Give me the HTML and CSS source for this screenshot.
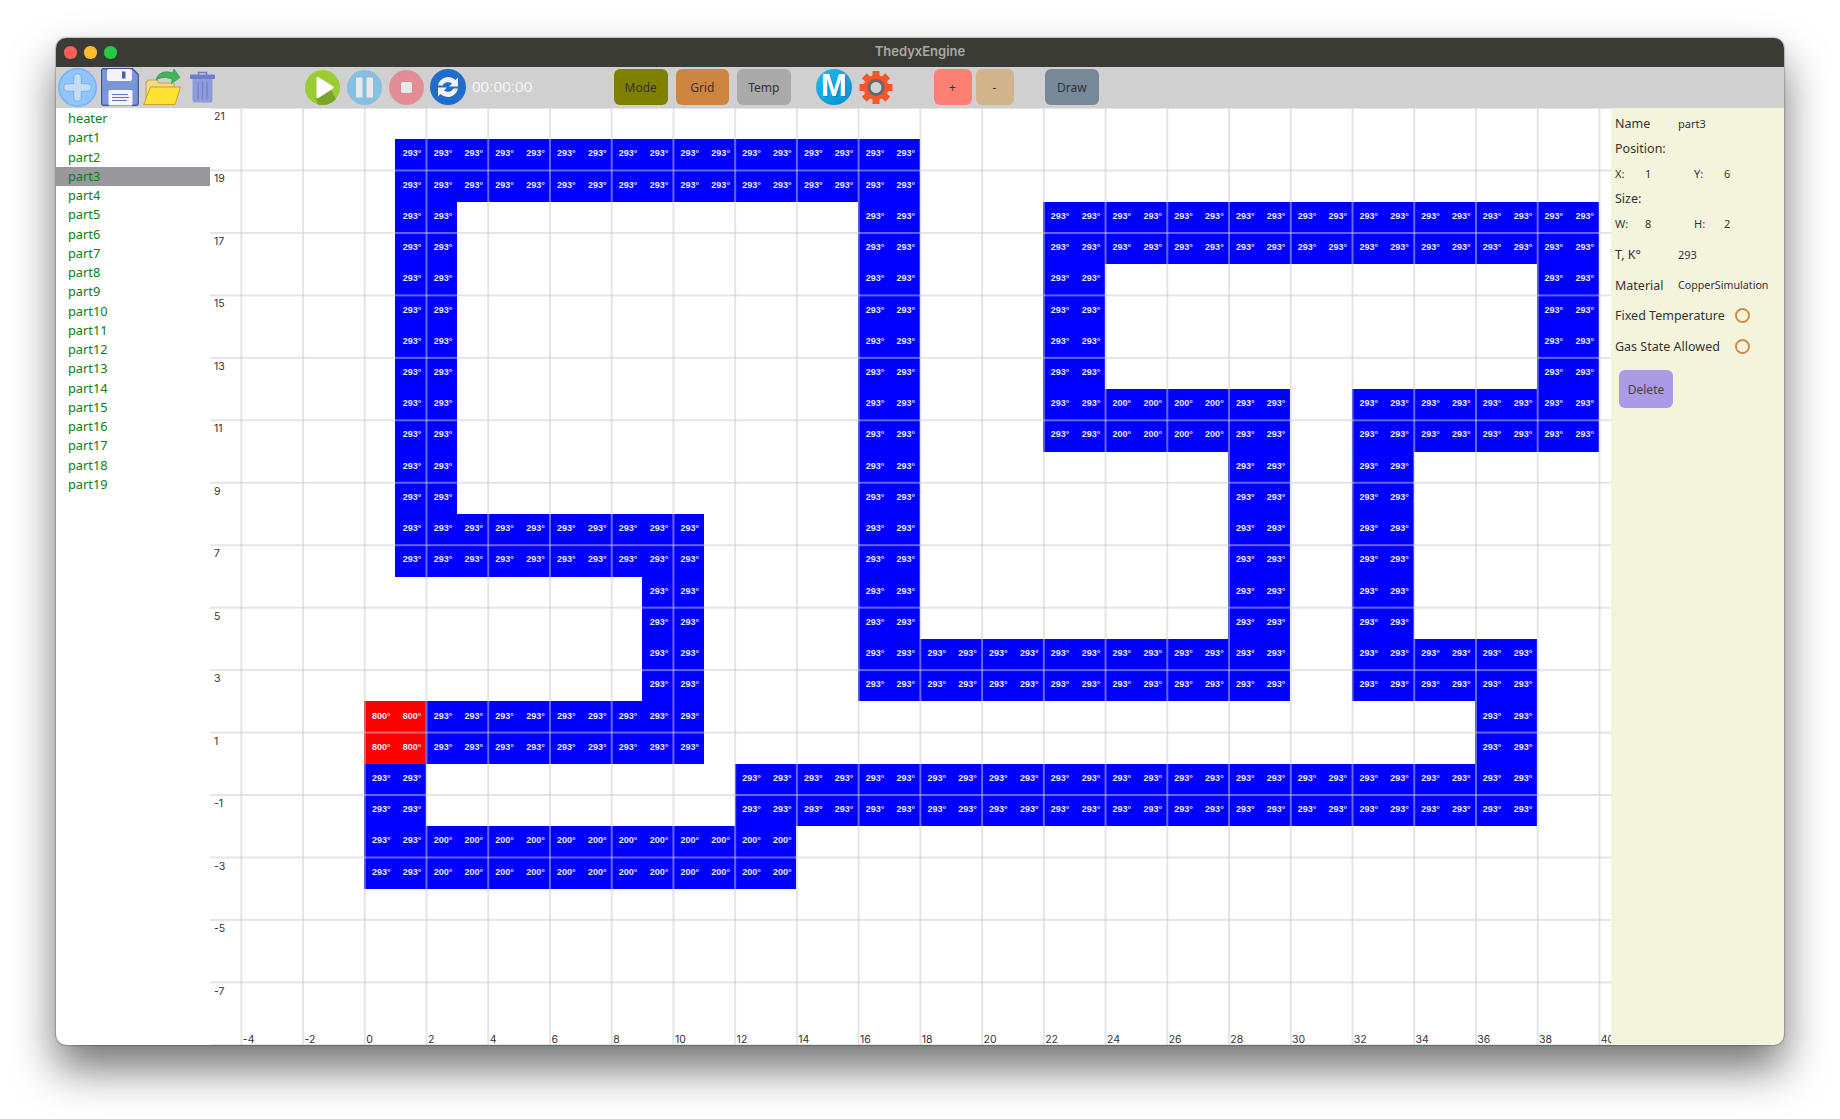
FILE: index.html
```html
<!DOCTYPE html>
<html lang="en">
<head>
    <meta charset="UTF-8">
    <title>ThedyxEngine</title>
    <link rel="stylesheet" href="styles.css">
</head>
<body>
    <div class="window">
        <div class="titlebar">
            <div class="lights">
                <span class="light light-red"></span>
                <span class="light light-yellow"></span>
                <span class="light light-green"></span>
            </div>
            <span class="title">ThedyxEngine</span>
        </div>

        <div class="toolbar">
            <svg class="icon file-group" width="39" height="39" viewBox="0 0 39 39">
                <circle cx="19.5" cy="19.5" r="18.7" fill="#93c5fb" stroke="#70b4fb" stroke-width="1.5"/>
                <path d="M19.5 9.5v20M9.5 19.5h20" stroke="#74b2f2" stroke-width="8.5" stroke-linecap="round"/>
                <path d="M19.5 9.5v20M9.5 19.5h20" stroke="#c6dcf3" stroke-width="6.5" stroke-linecap="round"/>
            </svg>
            <svg class="icon gap-4" width="38" height="38" viewBox="0 0 38 38">
                <path d="M2.5 .7h29l5.8 5.8v28.5a2.300 2.300 0 0 1-2.300 2.300h-32.500a2.300 2.300 0 0 1-2-2.300v-32.500a2 2 0 0 1 2-1.800z" fill="#7a95d8" stroke="#3d4f93" stroke-width="1.200"/>
                <rect x="6" y="1" width="25" height="12" rx="2" fill="#f4f4f8"/>
                <rect x="21" y="3.500" width="3.500" height="7" fill="#4a5da8"/>
                <rect x="7.500" y="22" width="24" height="15.500" rx="1.500" fill="#f4f4f8"/>
                <path d="M11 26.500h16M11 29.500h17M11 32.500h15" stroke="#5d72b8" stroke-width="1.100"/>
            </svg>
            <svg class="icon gap-4" width="38" height="38" viewBox="0 0 38 38">
                <path d="M3 36V14h1l1-2h9l2 3h15v21z" fill="#f3d987" stroke="#c9a24a"/>
                <path d="M7.500 19H37.500L32 36.500H.7z" fill="#ffe234" stroke="#c9a030"/>
                <path d="M13 12c1.500-7 9-10 16.500-7L31 1l6 8.500-8.500 6 .7-4.300C23 8.500 18 9 13 12z" fill="#3fb55a" stroke="#2c8f44" stroke-width=".6"/>
            </svg>
            <svg class="icon gap-9" width="25" height="32" viewBox="0 0 25 32">
                <path d="M8.500 4V1.500h8V4" fill="none" stroke="#6f7dc9" stroke-width="1.600"/>
                <rect x="0" y="3.500" width="25" height="4.500" rx="1.200" fill="#6f7dc9"/>
                <path d="M2.500 8h20v21.500a2 2 0 0 1-2 2h-16a2 2 0 0 1-2-2z" fill="#8e9bdc"/>
                <path d="M8 10.500v18M12.500 10.500v18M17 10.500v18" stroke="#7481cc" stroke-width="1.200"/>
            </svg>

            <svg class="icon sim-group" width="35" height="35" viewBox="0 0 35 35">
                <circle cx="17.500" cy="17.500" r="17.500" fill="#9acd32"/>
                <path d="M25 17.500L31 29A17.500 17.500 0 0 1 13 34.400L11 29z" fill="#7da52c"/>
                <path d="M11.500 8.500a1.500 1.500 0 0 1 2.300-1.200l14 9a1.500 1.500 0 0 1 0 2.400l-14 9a1.500 1.500 0 0 1-2.300-1.200z" fill="#fff"/>
            </svg>
            <svg class="icon gap-7" width="35" height="35" viewBox="0 0 35 35">
                <circle cx="17.500" cy="17.500" r="17.500" fill="#87bfe3"/>
                <rect x="9" y="7.500" width="6.500" height="20" fill="#e8e8e8"/>
                <rect x="19.500" y="7.500" width="6.500" height="20" fill="#e8e8e8"/>
            </svg>
            <svg class="icon gap-7" width="35" height="35" viewBox="0 0 35 35">
                <circle cx="17.500" cy="17.500" r="17.500" fill="#e38d94"/>
                <rect x="12" y="12" width="11" height="11" rx="2" fill="#e8e8e8"/>
            </svg>
            <svg class="icon gap-6" width="36" height="36" viewBox="0 0 36 36">
                <circle cx="18" cy="18" r="18" fill="#1f6ccb"/>
                <path d="M8 16.500a10.500 10.500 0 0 1 17.500-5.500l2.500-2.500v9h-9l3-3a6.500 6.500 0 0 0-9.500 2z" fill="#f2f2f2"/>
                <path d="M28 19.500a10.500 10.500 0 0 1-17.500 5.500L8 27.500v-9h9l-3 3a6.500 6.500 0 0 0 9.500-2z" fill="#f2f2f2"/>
            </svg>
            <span class="timer">00:00:00</span>

            <button class="tool-btn btn-mode">Mode</button>
            <button class="tool-btn btn-grid">Grid</button>
            <button class="tool-btn btn-temp">Temp</button>

            <svg class="icon logo-m" width="36" height="36" viewBox="0 0 36 36">
                <defs>
                    <linearGradient id="mFill" x1="0" y1="0" x2="1" y2="1">
                        <stop offset="0" stop-color="#1cc0f2"/>
                        <stop offset="1" stop-color="#0b8ccc"/>
                    </linearGradient>
                </defs>
                <circle cx="18" cy="18" r="18" fill="url(#mFill)"/>
                <text class="logo-letter logo-letter-shadow" x="19.500" y="28" text-anchor="middle">M</text>
                <text class="logo-letter" x="18" y="26.500" text-anchor="middle">M</text>
            </svg>
            <svg class="icon gap-7" width="34" height="35" viewBox="0 0 34 35">
                <g stroke="#f4572a" stroke-width="7">
                    <path d="M17 1v33M.5 17.500h33M5.300 5.800l23.400 23.400M28.700 5.800L5.300 29.200"/>
                </g>
                <circle cx="17" cy="17.500" r="12.500" fill="#f4572a"/>
                <circle cx="17" cy="17.500" r="7" fill="#d0d0d0" stroke="#66666e" stroke-width="3"/>
            </svg>

            <button class="tool-btn btn-small btn-plus">+</button>
            <button class="tool-btn btn-small btn-minus">-</button>
            <button class="tool-btn btn-draw">Draw</button>
        </div>

        <div class="main">
            <ul class="part-list">
                <li>heater</li>
                <li>part1</li>
                <li>part2</li>
                <li class="selected">part3</li>
                <li>part4</li>
                <li>part5</li>
                <li>part6</li>
                <li>part7</li>
                <li>part8</li>
                <li>part9</li>
                <li>part10</li>
                <li>part11</li>
                <li>part12</li>
                <li>part13</li>
                <li>part14</li>
                <li>part15</li>
                <li>part16</li>
                <li>part17</li>
                <li>part18</li>
                <li>part19</li>
            </ul>

            <!-- Cells and axis labels are added by script.js -->
            <div class="plot" id="plot"></div>

            <div class="props">
                <div class="prop-row">
                    <span class="prop-label">Name</span>
                    <span class="prop-value">part3</span>
                </div>
                <div class="prop-row">Position:</div>
                <div class="prop-row prop-small">
                    <span class="axis-label">X:</span><span class="axis-value">1</span>
                    <span class="axis-label">Y:</span><span class="axis-value">6</span>
                </div>
                <div class="prop-row">Size:</div>
                <div class="prop-row prop-small">
                    <span class="axis-label">W:</span><span class="axis-value">8</span>
                    <span class="axis-label">H:</span><span class="axis-value">2</span>
                </div>
                <div class="prop-row spaced temp-row">
                    <span class="prop-label">T, K°</span>
                    <span class="prop-value">293</span>
                </div>
                <div class="prop-row spaced">
                    <span class="prop-label">Material</span>
                    <span class="prop-value prop-material">CopperSimulation</span>
                </div>
                <div class="prop-row spaced">
                    <span class="check-label">Fixed Temperature</span>
                    <span class="radio"></span>
                </div>
                <div class="prop-row spaced">
                    <span class="check-label">Gas State Allowed</span>
                    <span class="radio"></span>
                </div>
                <button class="delete-btn">Delete</button>
            </div>
        </div>
    </div>

    <script src="script.js"></script>
</body>
</html>
```

FILE: styles.css
```css
body {
    margin: 0;
    height: 1119px;
    padding: 38px 56px 0;
    box-sizing: border-box;
    background-color: #fff;
    font-family: "Noto Sans", sans-serif;
    overflow: hidden;
}

.window {
    height: 1007px;
    display: flex;
    flex-direction: column;
    border-radius: 10px;
    overflow: hidden;
    background-color: #fff;
}

body::before {
    content: "";
    position: absolute;
    left: 56px;
    top: 38px;
    width: 1728px;
    height: 1007px;
    border-radius: 10px;
    box-shadow: 0 24px 44px rgba(0,0,0,0.55), 0 0 2px rgba(0,0,0,0.7);
}

.titlebar {
    position: relative;
    height: 29px;
    flex: none;
    display: flex;
    align-items: center;
    justify-content: center;
    padding-bottom: 4px;
    box-sizing: border-box;
    background-color: #3b3b35;
}

.lights {
    position: absolute;
    left: 8px;
    top: 8px;
    display: flex;
    gap: 7.5px;
}

.light {
    width: 12.5px;
    height: 12.5px;
    border-radius: 50%;
}

.light-red { background-color: #ff5f57; }
.light-yellow { background-color: #febc2e; }
.light-green { background-color: #28c840; }

.title {
    font-family: Inter, sans-serif;
    font-size: 13px;
    font-weight: 600;
    color: #a9a9a2;
}

.toolbar {
    height: 41px;
    flex: none;
    display: flex;
    align-items: center;
    padding: 0 0 1px 2px;
    box-sizing: border-box;
    background-color: #d0d0d0;
}

.icon {
    flex: none;
    display: block;
}

.gap-4 { margin-left: 4px; }
.gap-6 { margin-left: 6px; }
.gap-7 { margin-left: 7px; }
.gap-9 { margin-left: 9px; }
.sim-group { margin-left: 90px; }
.logo-m { margin-left: 25px; }

.logo-letter {
    font-family: "Liberation Sans", sans-serif;
    font-size: 31px;
    font-weight: 700;
    fill: #fff;
}

.logo-letter-shadow {
    fill: #0a78b4;
    opacity: 0.6;
}

.timer {
    width: 61px;
    margin-left: 6px;
    flex: none;
    font-family: "Liberation Sans", sans-serif;
    font-size: 15.5px;
    color: #f4f4f4;
}

.tool-btn {
    width: 53.5px;
    height: 36px;
    flex: none;
    padding: 0;
    border: none;
    border-radius: 6px;
    font-family: "Noto Sans", sans-serif;
    font-size: 12px;
    color: #333;
}

.btn-mode { margin-left: 81px; background-color: #808000; }
.btn-grid { margin-left: 8px; background-color: #cd853f; }
.btn-temp { margin-left: 8px; background-color: #a9a9a9; }
.btn-small { width: 38px; }
.btn-plus { margin-left: 41px; background-color: #fd7f73; }
.btn-minus { margin-left: 4px; background-color: #d2b48c; }
.btn-draw { width: 54.5px; margin-left: 31px; background-color: #778899; }

.main {
    flex: 1;
    min-height: 0;
    display: flex;
}

.part-list {
    width: 154px;
    flex: none;
    margin: 0;
    padding: 1px 0 0;
    list-style: none;
    font-size: 12.8px;
    color: #0c800c;
}

.part-list li {
    height: 19.26px;
    line-height: 19.26px;
    padding-left: 12px;
}

.part-list .selected {
    background-color: #98989c;
}

.plot {
    position: relative;
    flex: 1;
    min-width: 0;
    display: grid;
    grid-template-columns: repeat(45, 30.87px) 1fr;
    grid-template-rows: repeat(30, 1fr);
    overflow: hidden;
}

/* grid lines run over the cells, so they go in a layer on top */
.plot::after {
    content: "";
    position: absolute;
    inset: 0;
    pointer-events: none;
    background-image:
        linear-gradient(to right, rgba(203,203,203,0.5) 1.5px, transparent 1.5px),
        linear-gradient(to bottom, rgba(203,203,203,0.5) 1.5px, transparent 1.5px);
    background-size: 61.74px 100%, 100% 62.46px;
    background-position: 30.3px 0, 0 61.5px;
}

.cell {
    display: flex;
    align-items: center;
    justify-content: center;
    min-width: 0;
    min-height: 0;
    padding: 0 0 3px 3px;
    box-sizing: border-box;
    background-color: #0000ff;
    font-family: "Liberation Sans", sans-serif;
    font-size: 9px;
    font-weight: 700;
    color: #e8e8ff;
    white-space: nowrap;
}

.cell.hot {
    background-color: #ff0000;
}

.tick {
    min-width: 0;
    font-family: Inter, sans-serif;
    font-size: 10.5px;
    line-height: 14px;
    color: #333;
    white-space: nowrap;
}

.tick-y {
    padding: 2px 0 0 4px;
}

.tick-x {
    align-self: end;
    line-height: 11px;
    padding: 0 0 0 2px;
}

.props {
    width: 173px;
    flex: none;
    padding: 4px 0 0 4px;
    box-sizing: border-box;
    background-color: #f4f4dc;
    font-size: 12.5px;
    color: #333;
}

.prop-row {
    height: 22px;
    margin-bottom: 3px;
    display: flex;
    align-items: center;
}

.prop-row.spaced {
    margin-top: 8.5px;
}

.prop-row.temp-row {
    margin-top: 9.5px;
}

.prop-label {
    width: 63px;
}

.prop-value {
    font-size: 11px;
}

.prop-material {
    font-size: 10.7px;
}

.prop-small {
    font-size: 11px;
}

.axis-label {
    width: 30px;
}

.axis-value {
    width: 49px;
}

.check-label {
    width: 120px;
}

.radio {
    width: 11px;
    height: 11px;
    border: 2px solid #d08a45;
    border-radius: 50%;
}

.delete-btn {
    display: block;
    width: 54px;
    height: 38px;
    margin: 13px 0 0 4px;
    padding: 0;
    border: none;
    border-radius: 6px;
    background-color: #ab9ae6;
    font-family: "Noto Sans", sans-serif;
    font-size: 12px;
    color: #444;
}
```

FILE: script.js
```js
// Blocks of cells: [first column, last column, first row, last row, temperature]
// Column 0 is x = 0, row 0 is the row just under y = 21
const blocks = [
    [1, 17, 1, 2, 293],
    [1, 2, 3, 12, 293],
    [1, 10, 13, 14, 293],
    [9, 10, 15, 18, 293],
    [2, 10, 19, 20, 293],
    [0, 1, 19, 20, 800],
    [0, 1, 21, 24, 293],
    [2, 13, 23, 24, 200],
    [12, 37, 21, 22, 293],
    [36, 37, 17, 20, 293],
    [32, 35, 17, 18, 293],
    [32, 33, 9, 16, 293],
    [34, 39, 9, 10, 293],
    [38, 39, 3, 8, 293],
    [22, 37, 3, 4, 293],
    [22, 23, 5, 10, 293],
    [24, 27, 9, 10, 200],
    [28, 29, 9, 18, 293],
    [16, 27, 17, 18, 293],
    [16, 17, 3, 16, 293]
];

const plot = document.getElementById('plot');

// Function to put one item into the plot grid
function addToPlot(className, text, column, row) {
    const item = document.createElement('div');
    item.className = className;
    item.textContent = text;
    item.style.gridColumn = column;
    item.style.gridRow = row;
    plot.appendChild(item);
}

blocks.forEach(([c1, c2, r1, r2, temp]) => {
    for (let r = r1; r <= r2; r++) {
        for (let c = c1; c <= c2; c++) {
            addToPlot(temp === 800 ? 'cell hot' : 'cell', `${temp}°`, c + 6, r + 1);
        }
    }
});

for (let y = 21; y >= -7; y -= 2) {
    addToPlot('tick tick-y', y, 1, 22 - y);
}

for (let x = -4; x <= 40; x += 2) {
    addToPlot('tick tick-x', x, x + 6, 30);
}
```
